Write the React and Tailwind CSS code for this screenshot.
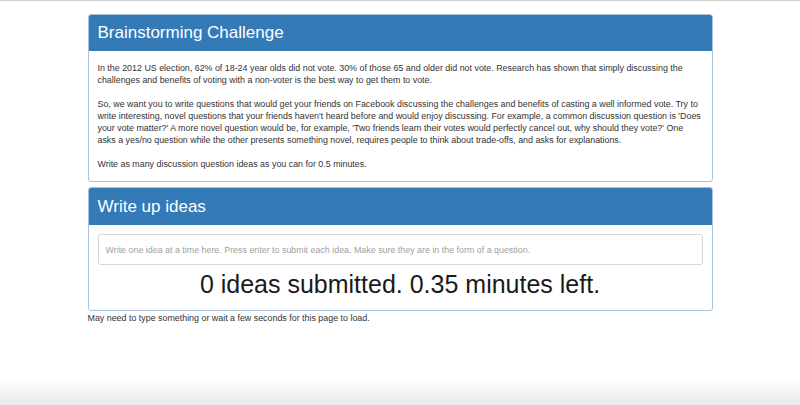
const Panel = ({ title, children, headClass }) => (
  <div className="rounded-[3px] border border-[#a8c0da] bg-white">
    <div
      className={`flex items-center rounded-t-[2px] bg-[#337ab7] px-[9px] text-[17px] text-white ${headClass}`}
    >
      {title}
    </div>
    {children}
  </div>
);

export default function App() {
  return (
    <div className="flex h-[405px] w-full flex-col overflow-hidden border-t border-[#cfcfcf] bg-white font-['Liberation_Sans',Arial,sans-serif] text-[#333]">
      <div className="mx-auto mt-[13px] w-[625px]">
        {/* Intro */}
        <Panel title="Brainstorming Challenge" headClass="h-[36px]">
          <div className="flex flex-col gap-[11px] px-[9px] pb-[11px] pt-[11px] text-[8.9px] leading-[12.3px]">
            <p>
              In the 2012 US election, 62% of 18-24 year olds did not vote. 30%
              of those 65 and older did not vote. Research has shown that
              simply discussing the challenges and benefits of voting with a
              non-voter is the best way to get them to vote.
            </p>
            <p>
              So, we want you to write questions that would get your friends on
              Facebook discussing the challenges and benefits of casting a well
              informed vote. Try to write interesting, novel questions that
              your friends haven't heard before and would enjoy discussing. For
              example, a common discussion question is 'Does your vote
              matter?' A more novel question would be, for example, 'Two
              friends learn their votes would perfectly cancel out, why should
              they vote?' One asks a yes/no question while the other presents
              something novel, requires people to think about trade-offs, and
              asks for explanations.
            </p>
            <p>
              Write as many discussion question ideas as you can for 0.5
              minutes.
            </p>
          </div>
        </Panel>

        {/* Ideas */}
        <div className="mt-[5px]">
          <Panel title="Write up ideas" headClass="h-[37px]">
            <div className="px-[9px] pb-[11px] pt-[9px]">
              <input
                type="text"
                placeholder="Write one idea at a time here. Press enter to submit each idea. Make sure they are in the form of a question."
                className="block h-[31px] w-full rounded-[3px] border border-[#d6d6d6] px-[7px] text-[8.9px] text-[#555] outline-none placeholder:text-[#a0a0a0]"
              />
              <p className="mt-[4px] text-center text-[25px] leading-[30px] text-[#1a1a1a]">
                0 ideas submitted. 0.35 minutes left.
              </p>
            </div>
          </Panel>
        </div>

        <p className="mt-px text-[8.9px] leading-[12.3px]">
          May need to type something or wait a few seconds for this page to
          load.
        </p>
      </div>
      <div className="flex-1" />
      <div className="h-[26px] bg-gradient-to-b from-white to-[#e9e9e9]" />
    </div>
  );
}
